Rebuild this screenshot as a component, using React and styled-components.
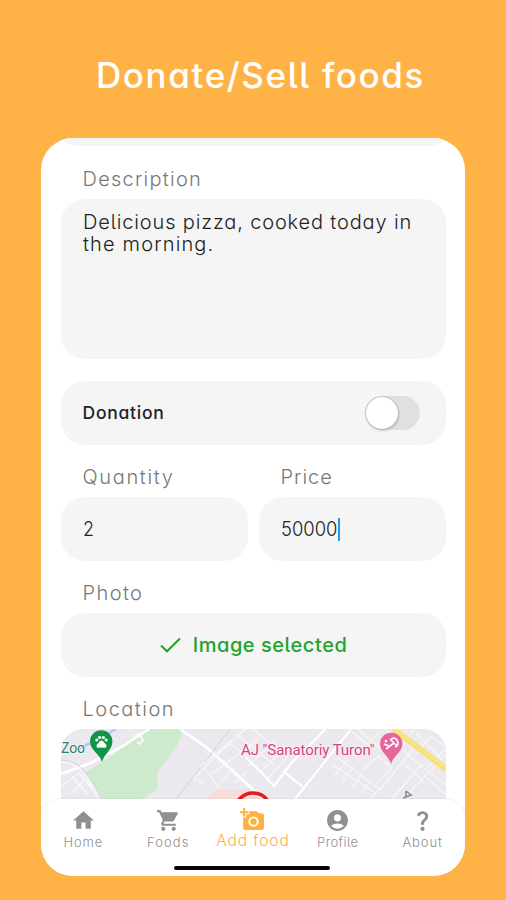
import React from "react";
import styled, { createGlobalStyle } from "styled-components";
import {
  MdHome,
  MdShoppingCart,
  MdAddAPhoto,
  MdAccountCircle,
  MdQuestionMark,
  MdPets,
} from "react-icons/md";

const GlobalStyle = createGlobalStyle`
  * { box-sizing: border-box; }
  body {
    margin: 0;
    background: #ffb347;
    font-family: Inter, Lato, sans-serif;
    font-feature-settings: "cv11", "cv05";
    color: #222;
  }
`;

const Screen = styled.main`
  width: 506px;
  height: 900px;
  overflow: hidden;
  background: #ffb347;
  display: flex;
  flex-direction: column;
  align-items: center;
`;

const Title = styled.h1`
  margin: 0;
  height: 138px;
  padding-top: 54px;
  padding-left: 15px;
  font-size: 35px;
  line-height: 42px;
  font-weight: 450;
  letter-spacing: 1.6px;
  color: #fff;
  white-space: nowrap;
`;

const Card = styled.section`
  width: 424px;
  height: 738px;
  background: #fff;
  border-radius: 32px;
  overflow: hidden;
  display: flex;
  flex-direction: column;
`;

const Form = styled.div`
  height: 661px;
  flex: none;
  padding: 0 19px 0 20px;
  display: flex;
  flex-direction: column;
`;

const PreviousField = styled.div`
  height: 8px;
  flex: none;
  border-radius: 0 0 22px 22px / 0 0 8px 8px;
  background: #f5f5f6;
`;

const Label = styled.label`
  display: block;
  flex: none;
  height: ${(p) => p.$height}px;
  padding: ${(p) => p.$top}px 0 0 21.5px;
  font-size: 20px;
  line-height: 24px;
  font-weight: 300;
  letter-spacing: ${(p) => p.$track}px;
  color: #777;
`;

const Field = styled.div`
  height: 64px;
  flex: none;
  border-radius: 24px;
  background: #f5f5f5;
  padding: 0 26px 0 22px;
  display: flex;
  align-items: center;
  font-size: 20px;
  font-weight: 300;
  letter-spacing: ${(p) => p.$track || 0}px;
`;

const TextArea = styled.div`
  height: 160px;
  flex: none;
  border-radius: 24px;
  background: #f5f5f5;
  padding: 12px 20px 0 22px;
  margin-bottom: 22px;
  font-size: 20px;
  line-height: 22px;
  font-weight: 300;
  white-space: nowrap;
`;

const Line = styled.span`
  display: block;
  letter-spacing: ${(p) => p.$track}px;
`;

const SwitchRow = styled(Field)`
  justify-content: space-between;
  padding-left: 21.5px;
  font-size: 17.5px;
  font-weight: 500;
`;

const SwitchText = styled.span`
  margin-top: -2px;
`;

const Track = styled.span`
  width: 55px;
  height: 34px;
  border-radius: 17px;
  background: #e0e0e0;
  padding: 1px;
`;

const Knob = styled.span`
  display: block;
  width: 32px;
  height: 32px;
  border-radius: 50%;
  background: #fff;
  box-shadow: 0 0 2px rgba(0, 0, 0, 0.35), 1px 2px 3px rgba(0, 0, 0, 0.12);
`;

const Columns = styled.div`
  display: grid;
  grid-template-columns: 187px 187px;
  gap: 11px;
`;

const Value = styled.span`
  display: inline-block;
  transform: scaleX(${(p) => p.$squeeze});
  transform-origin: left center;
  width: ${(p) => p.$width}px;
`;

const Caret = styled.span`
  width: 2px;
  height: 23px;
  background: #2196f3;
`;

const PhotoField = styled(Field)`
  justify-content: center;
  gap: 12px;
  padding: 0 0 1px;
  font-weight: 450;
  color: #1fa32c;
`;

const MapFrame = styled.div`
  height: 70px;
  flex: none;
  border-radius: 22px 22px 0 0;
  overflow: hidden;
  display: grid;

  > * { grid-area: 1 / 1; }
`;

const MapLabels = styled.div`
  position: relative;
  font-family: Roboto, sans-serif;
  font-feature-settings: normal;
`;

const Place = styled.span`
  position: absolute;
  left: ${(p) => p.$x}px;
  top: ${(p) => p.$y}px;
  font-size: ${(p) => p.$size}px;
  line-height: 18px;
  letter-spacing: ${(p) => p.$track}px;
  font-weight: 400;
  color: ${(p) => p.$color};
  white-space: nowrap;
  text-shadow: 0 0 2px #fff, 0 0 2px #fff;
`;

const PawMark = styled(MdPets)`
  position: absolute;
  left: 33px;
  top: 5px;
  color: #fff;
`;

const BottomBar = styled.nav`
  flex: 1;
  background: #fff;
  border-radius: 20px 20px 0 0;
  box-shadow: 0 0 2px rgba(0, 0, 0, 0.14);
  display: flex;
  flex-direction: column;
  align-items: center;
`;

const Tabs = styled.div`
  width: 424px;
  height: 67px;
  display: grid;
  grid-template-columns: repeat(5, 1fr);
`;

const Tab = styled.a`
  display: flex;
  flex-direction: column;
  align-items: center;
  padding-top: ${(p) => (p.$active ? 8 : 9)}px;
  color: ${(p) => (p.$active ? "#ffb03f" : "#909090")};

  svg { flex: none; }
`;

const TabName = styled.span`
  margin-top: 0;
  font-size: ${(p) => (p.$active ? 15.5 : 13)}px;
  line-height: 18px;
  font-weight: 300;
  letter-spacing: ${(p) => p.$track}px;
  white-space: nowrap;
`;

const HomeIndicator = styled.div`
  width: 156px;
  height: 4px;
  margin-right: 3px;
  border-radius: 2px;
  background: #050505;
`;

const tabs = [
  { name: "Home", Icon: MdHome, track: 0.9 },
  { name: "Foods", Icon: MdShoppingCart, track: 1.1 },
  { name: "Add food", Icon: MdAddAPhoto, track: 0.9, active: true },
  { name: "Profile", Icon: MdAccountCircle, track: 0.4 },
  { name: "About", Icon: MdQuestionMark, track: 0.9 },
];

function CheckMark() {
  return (
    <svg width="21" height="16" viewBox="0 0 21 16" fill="none">
      <path d="M1 8.500L7 14.300L20 1.500" stroke="currentColor" strokeWidth="2" />
    </svg>
  );
}

function MapDrawing() {
  return (
    <svg width="385" height="70" viewBox="0 0 385 70" fill="none">
      <rect width="385" height="70" fill="#ebe9ed" />
      <path d="M84 0H122L116 17L104 33L97 42L96 60L82 70H42L25 43L39 35L63 18Z" fill="#cdebcc" />
      <path d="M55 0L38 10L17 20" stroke="#a9cdf8" strokeWidth="2.5" />
      <path d="M145 70L155 61L188 60L204 70Z" fill="#f6ddd9" />
      <path d="M0 45L30 34L62 17L88 0M119 0L145 18L174 44L198 66L203 70" stroke="#fff" strokeWidth="2.6" />
      <path d="M72 8L78 5L82 11L79 15L76 13" stroke="#f6fbf6" strokeWidth="1.8" />
      <path d="M0 33C15 32 27 46 37 70M1 57L18 44L36 65M10 65L24 50M11 47L27 66" stroke="#f8f7fa" strokeWidth="1.5" />
      <path d="M0 31C17 31 29 45 41 70M169 0L145 32L115 70" stroke="#d4d2d6" strokeWidth="1" />
      <path d="M139 38L185 0M143 56L133 49L174 9M157 58L143 38M163 31L176 49M151 45L181 22M159 54L173 39M170 15L188 29M175 5L213 36M184 22L198 8M187 37L214 12M198 44L221 22M206 50L227 28M174 54L185 43M192 0L225 27" stroke="#f8f7fa" strokeWidth="1.2" />
      <path d="M184 28L202 45L213 57L232 32L255 10L264 0M222 42L242 58M234 70L290 0" stroke="#fff" strokeWidth="2.2" />
      <path d="M272 36L313 63M277 29L320 61M273 48L286 31M281 54L293 37M290 60L300 47M299 64L310 52M301 42L317 27L331 39L316 54M309 70L321 58L352 20M331 70L360 36M342 70L385 25M343 35L363 53M324 0L348 27L385 56M365 48L385 66M291 3L306 15L319 3M297 0L333 31M342 14L354 0M354 26L370 7L385 18M366 39L385 19M355 4L381 30" stroke="#f7f6f9" strokeWidth="1.3" />
      <path d="M332 0L351 14L385 40" stroke="#f8e07b" strokeWidth="6" />
      <path d="M333 0L352 14L385 39" stroke="#fbeaa0" strokeWidth="1" />
      <circle cx="192" cy="82" r="18" stroke="#e41c1c" strokeWidth="3.5" />
      <path d="M345 62V68M345 62L350 66L345 68L342 69" stroke="#8a8a92" strokeWidth="1.6" />
      <path d="M41 33C39 25 29 21 29 12.500A11.200 11.200 0 0 1 51.400 12.500C51.400 21 43 25 41 33Z" fill="#119447" />
      <path d="M330 35C328 27 319 23 319 15A11.200 11.200 0 0 1 341.400 15C341.400 23 332 27 330 35Z" fill="#e8649a" />
      <path d="M329 11Q335 6 337 14Q337 17 334 18M330 11L336 17M333 14L325 20" stroke="#fff" strokeWidth="1.6" />
      <path d="M323 15L328 17" stroke="#fff" strokeWidth="1.5" />
      <circle cx="325" cy="12" r="1.300" fill="#fff" />
    </svg>
  );
}

export default function App() {
  return (
    <Screen>
      <GlobalStyle />
      <Title>Donate/Sell foods</Title>
      <Card>
        <Form>
          <PreviousField />
          <Label $height={53} $top={21} $track={1.25}>Description</Label>
          <TextArea>
            <Line $track={0.85}>Delicious pizza, cooked today in</Line>
            <Line $track={1.15}>the morning.</Line>
          </TextArea>
          <SwitchRow $track={0.75}>
            <SwitchText>Donation</SwitchText>
            <Track><Knob /></Track>
          </SwitchRow>
          <Columns>
            <div>
              <Label $height={52} $top={20} $track={1.65}>Quantity</Label>
              <Field><Value $squeeze={0.9} $width={12}>2</Value></Field>
            </div>
            <div>
              <Label $height={52} $top={20} $track={1}>Price</Label>
              <Field>
                <Value $squeeze={0.92} $width={57}>50000</Value>
                <Caret />
              </Field>
            </div>
          </Columns>
          <Label $height={52} $top={20} $track={1.4}>Photo</Label>
          <PhotoField $track={0.55}>
            <CheckMark />
            <span>Image selected</span>
          </PhotoField>
          <Label $height={52} $top={20} $track={1.5}>Location</Label>
          <MapFrame>
            <MapDrawing />
            <MapLabels>
              <Place $x={0} $y={10} $size={14} $track={-0.1} $color="#2f7f70">Zoo</Place>
              <Place $x={180} $y={12} $size={15} $track={-0.07} $color="#d83f80">AJ "Sanatoriy Turon"</Place>
              <PawMark size={15} />
            </MapLabels>
          </MapFrame>
        </Form>
        <BottomBar>
          <Tabs>
            {tabs.map(({ name, Icon, track, active }) => (
              <Tab key={name} $active={active}>
                <Icon size={25} />
                <TabName $active={active} $track={track}>{name}</TabName>
              </Tab>
            ))}
          </Tabs>
          <HomeIndicator />
        </BottomBar>
      </Card>
    </Screen>
  );
}
